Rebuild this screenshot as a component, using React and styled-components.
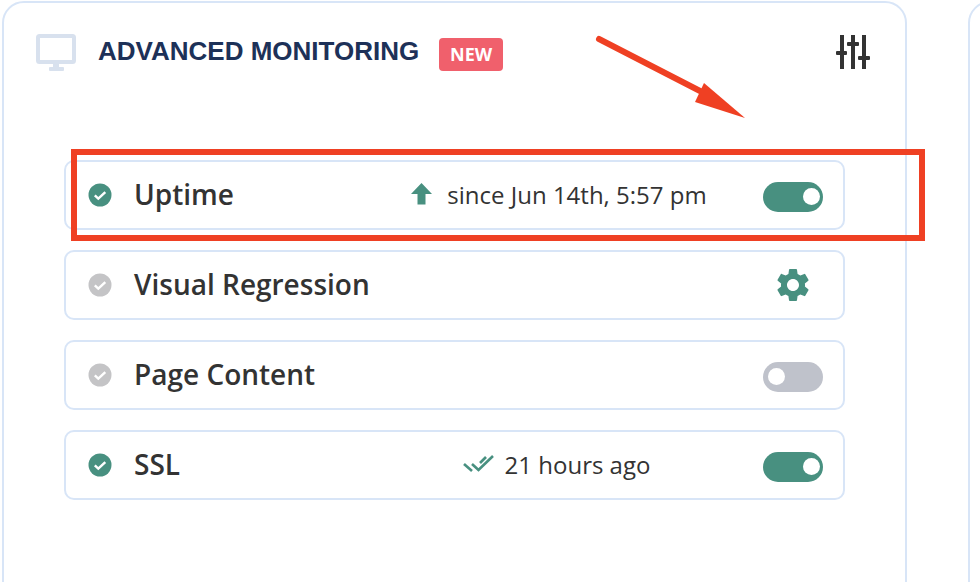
import React from 'react';
import styled, { createGlobalStyle } from 'styled-components';
import { MdSettings } from 'react-icons/md';

const GlobalStyle = createGlobalStyle`
  html, body {
    margin: 0;
    padding: 0;
    background: #fff;
    overflow: hidden;
  }
`;

const Page = styled.div`
  position: relative;
  display: flex;
  gap: 61px;
  width: 980px;
  height: 582px;
  padding: 1px 0 0 2px;
  box-sizing: border-box;
  overflow: hidden;
  font-family: "Open Sans", sans-serif;
  color: #333;
`;

const Card = styled.section`
  flex: 0 0 905px;
  height: 640px;
  box-sizing: border-box;
  padding: 30px 35px 0 32px;
  border: 2px solid #d8e5f7;
  border-radius: 22px;
`;

const NextCard = styled(Card)`
  flex: 0 0 905px;
`;

const Header = styled.header`
  display: flex;
  align-items: center;
  height: 40px;
`;

const Title = styled.h2`
  margin: 0 20px 4px 22px;
  font-family: "Liberation Sans", Arial, sans-serif;
  font-size: 26px;
  font-weight: 700;
  color: #1d3158;
  white-space: nowrap;
`;

const Badge = styled.span`
  display: flex;
  align-items: center;
  justify-content: center;
  width: 64px;
  height: 33px;
  margin-top: 2px;
  border-radius: 4px;
  background: #f0606c;
  color: #fff;
  font-size: 18px;
  font-weight: 700;
`;

const HeaderAction = styled.div`
  display: flex;
  margin: 0 0 2px auto;
`;

const Rows = styled.div`
  display: flex;
  flex-direction: column;
  gap: 20px;
  width: 781px;
  margin: 87px 0 0 28px;
`;

const Row = styled.div`
  display: flex;
  align-items: center;
  height: 70px;
  box-sizing: border-box;
  padding: 0 20px 0 22px;
  border: 2px solid #d8e5f7;
  border-radius: 10px;
`;

const Check = styled.span`
  display: flex;
  flex: 0 0 24px;
  margin-right: 22px;
`;

const Name = styled.span`
  flex: 0 0 240px;
  padding-bottom: 2px;
  font-size: 28px;
  font-weight: 600;
  white-space: nowrap;
`;

const Status = styled.div`
  display: flex;
  flex: 1;
  align-items: center;
  justify-content: center;
  gap: ${(p) => p.$gap}px;
  padding: 0 ${(p) => p.$inset}px 2px 0;
  font-size: 24px;
  white-space: nowrap;
`;

const Action = styled.div`
  display: flex;
  flex: 0 0 60px;
  justify-content: center;
`;

const Toggle = styled.span`
  position: relative;
  display: block;
  width: 60px;
  height: 30px;
  margin-top: 4px;
  border-radius: 15px;
  background: ${(p) => (p.$on ? '#489080' : '#bfc2cb')};

  &::after {
    content: '';
    position: absolute;
    top: 6px;
    left: ${(p) => (p.$on ? '40px' : '5px')};
    width: 17px;
    height: 17px;
    border-radius: 50%;
    background: #fff;
  }
`;

const Callout = styled.div`
  position: absolute;
  left: 71px;
  top: 149px;
  width: 854px;
  height: 92px;
  box-sizing: border-box;
  border: 6px solid #ef4023;
`;

const ArrowSvg = styled.svg`
  position: absolute;
  left: 590px;
  top: 30px;
`;

const MonitorIcon = () => (
  <svg width="40" height="38" viewBox="0 0 40 38" fill="none">
    <rect x="2" y="2" width="36" height="26" rx="1.5" stroke="#d8e1ee" strokeWidth="4" />
    <rect x="17" y="29" width="6" height="5" fill="#d8e1ee" />
    <rect x="13" y="33" width="15" height="4" rx="1" fill="#d8e1ee" />
  </svg>
);

const SlidersIcon = () => (
  <svg width="34" height="34" viewBox="0 0 34 34" fill="#333">
    <rect x="4" y="0" width="4" height="34" />
    <rect x="15" y="0" width="4" height="34" />
    <rect x="26" y="0" width="4" height="34" />
    <rect x="0" y="16" width="11" height="4" rx="1" />
    <rect x="11" y="7" width="12" height="4" rx="1" />
    <rect x="22" y="21" width="12" height="4" rx="1" />
  </svg>
);

const CheckIcon = ({ on }) => (
  <svg width="24" height="24" viewBox="0 0 24 24">
    <circle cx="12" cy="12" r="11.5" fill={on ? '#489080' : '#c4c4c6'} />
    <path d="M6.8 12.400l3.500 3.300 7-6.600" fill="none" stroke="#fff" strokeWidth="2.4" />
  </svg>
);

const UpIcon = () => (
  <svg width="21" height="22" viewBox="0 0 21 22" fill="#489080">
    <path d="M10.5 0L21 11h-6.500v10.500h-8V11H0z" />
  </svg>
);

const DoubleCheckIcon = () => (
  <svg width="31" height="18" viewBox="0 0 31 18" fill="none" stroke="#489080" strokeWidth="2.6">
    <path d="M1 9l8 7" />
    <path d="M9 9l6.500 6L30 1" />
    <path d="M17 8l6-6" />
  </svg>
);

const rows = [
  {
    name: 'Uptime',
    on: true,
    status: (
      <Status $gap={15} $inset={19}>
        <UpIcon />
        since Jun 14th, 5:57 pm
      </Status>
    ),
    action: <Toggle $on />,
  },
  { name: 'Visual Regression', on: false, action: <MdSettings size={40} color="#489080" /> },
  { name: 'Page Content', on: false, action: <Toggle /> },
  {
    name: 'SSL',
    on: true,
    status: (
      <Status $gap={11} $inset={24}>
        <DoubleCheckIcon />
        21 hours ago
      </Status>
    ),
    action: <Toggle $on />,
  },
];

const App = () => (
  <>
    <GlobalStyle />
    <Page>
      <Card>
        <Header>
          <MonitorIcon />
          <Title>ADVANCED MONITORING</Title>
          <Badge>NEW</Badge>
          <HeaderAction>
            <SlidersIcon />
          </HeaderAction>
        </Header>
        <Rows>
          {rows.map((row) => (
            <Row key={row.name}>
              <Check>
                <CheckIcon on={row.on} />
              </Check>
              <Name>{row.name}</Name>
              {row.status || <Status />}
              <Action>{row.action}</Action>
            </Row>
          ))}
        </Rows>
      </Card>
      <NextCard />
      <Callout />
      <ArrowSvg width="170" height="100" viewBox="0 0 170 100">
        <path d="M9 9L112 62" stroke="#ef4023" strokeWidth="6" strokeLinecap="round" />
        <path d="M114 53L105 72L155 88z" fill="#ef4023" />
      </ArrowSvg>
    </Page>
  </>
);

export default App;
